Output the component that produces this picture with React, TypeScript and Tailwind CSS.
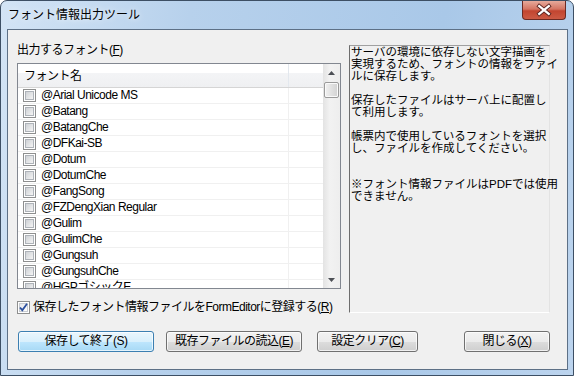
import React from "react";

const FONT = "font-['Liberation_Sans','Noto_Sans_CJK_JP',sans-serif]";

const fontNames = [
  "@Arial Unicode MS",
  "@Batang",
  "@BatangChe",
  "@DFKai-SB",
  "@Dotum",
  "@DotumChe",
  "@FangSong",
  "@FZDengXian Regular",
  "@Gulim",
  "@GulimChe",
  "@Gungsuh",
  "@GungsuhChe",
  "@HGPゴシックE",
];

const infoLines = [
  "サーバの環境に依存しない文字描画を",
  "実現するため、フォントの情報をファイ",
  "ルに保存します。",
  "",
  "保存したファイルはサーバ上に配置し",
  "て利用します。",
  "",
  "帳票内で使用しているフォントを選択",
  "し、ファイルを作成してください。",
  "",
  "",
  "※フォント情報ファイルはPDFでは使用",
  "できません。",
];

function CheckBox({ checked = false }: { checked?: boolean }) {
  return (
    <span className="relative flex w-[13px] h-[13px] shrink-0 border border-[#8e8f8f] bg-white p-px">
      <span
        className={
          checked
            ? "flex-1 border border-[#c8ccd2] bg-gradient-to-br from-[#e4e6ea] to-white"
            : "flex-1 border border-[#aeb3b9] bg-gradient-to-br from-[#cfd2d6] to-[#f4f4f4]"
        }
      />
      {checked && (
        <svg className="absolute left-0 top-0" width="11" height="11" viewBox="0 0 11 11">
          <path d="M2 5.5 L4.3 8.2 L9 1.8" fill="none" stroke="#2b4f9e" strokeWidth="1.8" />
        </svg>
      )}
    </span>
  );
}

function Arrow({ down = false }: { down?: boolean }) {
  return (
    <svg width="7" height="4" viewBox="0 0 7 4">
      <path d={down ? "M0 0 H7 L3.5 4 Z" : "M0 4 H7 L3.5 0 Z"} fill="#4d5056" />
    </svg>
  );
}

function WinButton({
  label,
  mnemonic,
  underline = true,
  primary = false,
  className = "",
}: {
  label: string;
  mnemonic: string;
  underline?: boolean;
  primary?: boolean;
  className?: string;
}) {
  return (
    <button
      className={
        "h-[21px] rounded-[3px] border text-[12px] leading-[19px] text-black flex items-center justify-center shadow-[inset_0_0_0_1px_rgba(255,255,255,0.7)] " +
        (primary
          ? "border-[#3c7fb1] bg-[linear-gradient(#eaf6fd_0%,#d9f0fc_50%,#bee6fd_51%,#a7d9f5_100%)] "
          : "border-[#707070] bg-[linear-gradient(#f2f2f2_0%,#ebebeb_50%,#dddddd_51%,#cfcfcf_100%)] ") +
        className
      }
    >
      {label}(<span className={underline ? "underline underline-offset-1" : ""}>{mnemonic}</span>)
    </button>
  );
}

export default function App() {
  return (
    <div
      className={
        "w-[574px] h-[376px] flex flex-col overflow-hidden rounded-t-[7px] border border-[#3d4f64] bg-[linear-gradient(100deg,#d3e4f5_0%,#b7d1ec_30%,#a9c8e8_70%,#bcd4ee_100%)] tracking-[-0.5px] " +
        FONT
      }
    >
      {/* Title bar */}
      <div className="h-[28px] flex items-start justify-between shrink-0">
        <div className="self-center pl-[7px] text-[12px] leading-[14px] tracking-normal text-black [text-shadow:0_0_6px_#ffffff]">
          フォント情報出力ツール
        </div>
        <div className="mr-[7px] w-[44px] h-[19px] rounded-b-[4px] border border-t-0 border-[#6b2a23] bg-[linear-gradient(#e6aa9b_0%,#d47462_45%,#c24530_55%,#cc5a44_100%)] flex items-center justify-center">
          <svg width="44" height="18" viewBox="0 0 44 18">
            <path d="M17 5 L27 13 M27 5 L17 13" stroke="#5a2420" strokeWidth="4.2" strokeLinecap="square" />
            <path d="M17 5 L27 13 M27 5 L17 13" stroke="#ffffff" strokeWidth="2.4" strokeLinecap="square" />
          </svg>
        </div>
      </div>

      {/* Client area */}
      <div className="ml-[6px] mr-[5px] h-[341px] border border-[#5d7086] bg-[#f0f0f0] flex flex-col text-[12px] text-black">
        <div className="flex pt-[13px] pl-[9px]">
          {/* Left column */}
          <div className="w-[324px] flex flex-col">
            <div className="h-[14px] leading-[14px]">
              出力するフォント(<span className="underline underline-offset-1">F</span>)
            </div>
            <div className="mt-[6px] h-[226px] border border-[#828790] bg-white flex">
              <div className="flex-1 flex flex-col overflow-hidden">
                <div className="h-[24px] shrink-0 flex border-b border-[#d5d5d5] bg-[linear-gradient(#ffffff_0%,#ffffff_40%,#f3f4f6_41%,#eff0f2_100%)]">
                  <div className="w-[271px] border-r border-[#e3e8ee] pl-[6px] flex items-center">フォント名</div>
                  <div className="flex-1" />
                </div>
                {fontNames.map((name) => (
                  <div key={name} className="h-[16px] shrink-0 flex border-b border-[#f0f0f0]">
                    <div className="w-[271px] border-r border-[#f0f0f0] flex items-center pl-[5px] whitespace-nowrap">
                      <CheckBox />
                      <span className="ml-[5px] leading-[15px]">{name}</span>
                    </div>
                    <div className="flex-1" />
                  </div>
                ))}
              </div>
              {/* Scrollbar */}
              <div className="w-[17px] shrink-0 flex flex-col bg-[linear-gradient(90deg,#e3e3e3,#f2f2f2_40%,#eeeeee)]">
                <div className="h-[17px] flex items-center justify-center">
                  <Arrow />
                </div>
                <div className="mx-[1px] mt-[1px] h-[16px] rounded-[2px] border border-[#9a9a9a] bg-[linear-gradient(90deg,#f1f1f1,#e1e1e1_50%,#d2d2d2)] shadow-[inset_0_0_0_1px_#fafafa]" />
                <div className="flex-1" />
                <div className="h-[17px] flex items-center justify-center">
                  <Arrow down />
                </div>
              </div>
            </div>
            <div className="mt-[11px] h-[14px] flex items-center">
              <CheckBox checked />
              <span className="ml-[3px] leading-[14px] whitespace-nowrap">
                保存したフォント情報ファイルをFormEditorに登録する(
                <span className="underline underline-offset-1">R</span>)
              </span>
            </div>
          </div>

          {/* Right info box */}
          <div className="ml-[8px] mt-[2px] w-[201px] h-[268px] border border-t-[#a0a0a0] border-l-[#6d6d6d] border-r-[#e3e3e3] border-b-[#ffffff] bg-[#f0f0f0] pl-px text-[11.5px] leading-[12px] tracking-normal">
            {infoLines.map((line, i) => (
              <div key={i} className="h-[12px] whitespace-nowrap">
                {line}
              </div>
            ))}
          </div>
        </div>

        {/* Buttons */}
        <div className="mt-[17px] pl-[10px] flex">
          <WinButton label="保存して終了" mnemonic="S" underline={false} primary className="w-[136px]" />
          <WinButton label="既存ファイルの読込" mnemonic="E" className="ml-[12px] w-[136px]" />
          <WinButton label="設定クリア" mnemonic="C" className="ml-[15px] w-[101px]" />
          <WinButton label="閉じる" mnemonic="X" className="ml-[46px] w-[86px]" />
        </div>
      </div>
    </div>
  );
}
